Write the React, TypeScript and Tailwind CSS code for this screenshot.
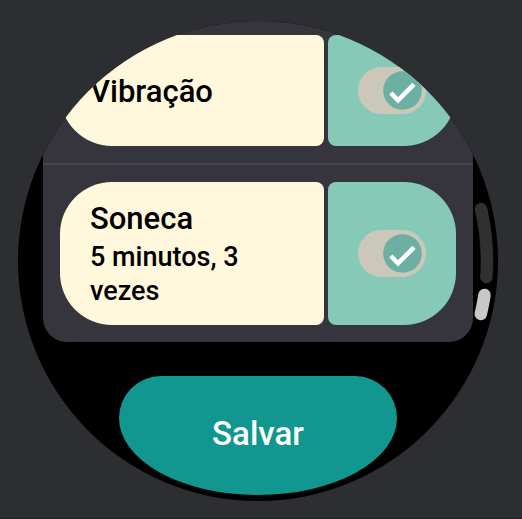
import { useId, useState } from "react";

type SettingProps = {
  title: string;
  detail?: string;
};

function Setting({ title, detail }: SettingProps) {
  const id = useId();
  const [on, setOn] = useState(true);

  return (
    <div className="flex gap-1">
      <label
        htmlFor={id}
        className="flex min-w-0 flex-1 flex-col justify-center gap-[3px] rounded-l-[52px] rounded-r-lg bg-[#fff8dd] pt-[19px] pr-[60px] pb-[17px] pl-[30px] font-medium text-black"
      >
        <span className="text-[31px] leading-9">{title}</span>
        {detail && <span className="text-[27px] leading-[34px]">{detail}</span>}
      </label>
      <div className="flex min-h-[111px] w-32 items-center justify-center rounded-l-lg rounded-r-[52px] bg-[#87c9b7]">
        <div className="grid h-[47px] w-[68px] items-center">
          <input
            id={id}
            type="checkbox"
            role="switch"
            checked={on}
            onChange={() => setOn(!on)}
            className="col-start-1 row-start-1 h-full w-full cursor-pointer appearance-none rounded-full bg-[#cbc8b9]"
          />
          <svg
            viewBox="0 0 39 39"
            className={
              on
                ? "pointer-events-none col-start-1 row-start-1 mr-1 size-[39px] justify-self-end"
                : "pointer-events-none col-start-1 row-start-1 ml-1 size-[39px] justify-self-start"
            }
            aria-hidden="true"
          >
            <circle cx="19.5" cy="19.5" r="19.3" fill="#6bb0a3" />
            {on && (
              <path d="M7.8 22 L15 29.3 L31 13.3" fill="none" stroke="#ffffff" strokeWidth="4.5" />
            )}
          </svg>
        </div>
      </div>
    </div>
  );
}

export default function App() {
  return (
    <main className="flex min-h-screen items-start justify-center border-b border-[#1f2022] bg-[#2d2e31] pt-[21px] pr-1.5 font-['Roboto',sans-serif]">
      <div className="relative aspect-square w-full max-w-[480px] overflow-hidden rounded-full bg-black px-[25px]">
        <section className="rounded-b-3xl bg-[#36343d] pt-3.5 pb-[17px]">
          <div className="px-[17px]">
            <Setting title="Vibração" />
          </div>
          <hr className="my-[17px] border-t-2 border-[#47464f]" />
          <div className="px-[17px]">
            <Setting title="Soneca" detail="5 minutos, 3 vezes" />
          </div>
        </section>
        <button
          type="button"
          className="mx-auto mt-[34px] block h-[119px] w-[278px] rounded-[42px_42px_50%_50%/42px_42px_77px_77px] bg-[#11978f] pb-1 text-[33px] font-medium text-white"
        >
          Salvar
        </button>
        <svg
          viewBox="0 0 480 480"
          className="pointer-events-none absolute inset-0 size-full"
          fill="none"
          strokeWidth="12.5"
          strokeLinecap="round"
          aria-hidden="true"
        >
          <path d="M463 188 A229 229 0 0 1 468.4 256" stroke="#2f3130" />
          <path d="M466.5 274 A229 229 0 0 1 462.8 293" stroke="#c8c8c8" />
        </svg>
      </div>
    </main>
  );
}
